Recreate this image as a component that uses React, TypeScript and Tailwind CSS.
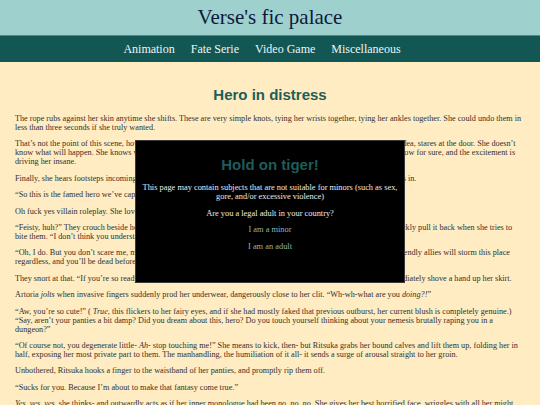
import React from 'react'

const serif = "font-['Liberation_Serif',serif]"
const sans = "font-['Liberation_Sans',Arial,sans-serif]"

const navLinks = ['Animation', 'Fate Serie', 'Video Game', 'Miscellaneous']

function Header() {
  return (
    <header className={serif}>
      <div className="flex h-[35px] items-center justify-center bg-[#9ed0ce]">
        <h1 className="text-[21px] leading-none text-[#0e1a3c]">Verse's fic palace</h1>
      </div>
      <nav className="flex h-[27px] items-center justify-center gap-[16px] border-t border-[#4f8a87] bg-[#135755] pr-[16px]">
        {navLinks.map((link) => (
          <a key={link} href="#" className="text-[12px] text-[#eef4f2]">
            {link}
          </a>
        ))}
      </nav>
    </header>
  )
}

function AgeGate() {
  return (
    <div className="fixed inset-0 flex justify-center pt-[140px]">
      <div className={`h-[143px] w-[270px] border border-[#3a3a3a] bg-black px-[4px] pt-[15px] text-center ${serif}`}>
        <h2 className={`mb-[9px] text-[15px] font-bold leading-[18px] text-[#1f5b58] ${sans}`}>Hold on tiger!</h2>
        <div className="text-[8.4px] leading-[9px] text-[#ececec] [&>p]:mb-[7.5px]">
          <p>This page may contain subjects that are not suitable for minors (such as sex, gore, and/or excessive violence)</p>
          <p>Are you a legal adult in your country?</p>
          <p>
            <a href="#" className="text-[#93b2b0]">I am a minor</a>
          </p>
          <p>
            <a href="#" className="text-[#93b2b0]">I am an adult</a>
          </p>
        </div>
      </div>
    </div>
  )
}

export default function App() {
  return (
    <div className="min-h-screen bg-[#ffecc2]">
      <Header />
      <main className={`px-[15px] pb-8 ${serif}`}>
        <h2 className={`mb-[10px] pt-[24px] text-center text-[15px] font-bold leading-[18px] text-[#1e5d58] ${sans}`}>
          Hero in distress
        </h2>
        <div className="text-[8.2px] leading-[9px] text-[#35302c] [&>p]:mb-[7.4px]">
          <p>
            The rope rubs against her skin anytime she shifts. These are very simple knots, tying her wrists together,
            tying her ankles together. She could undo them in less than three seconds if she truly wanted.
          </p>
          <p>
            That’s not the point of this scene, however. She squirms against her bonds, heart racing wildly, and, giddy
            at the very idea, stares at the door. She doesn’t know what will happen. She knows what she wants to happen,
            of course, but she can’t, not in a million years, really know for sure, and the excitement is driving her
            insane.
          </p>
          <p>
            Finally, she hears footsteps incoming. The door creaks open, and a cloaked figure wearing a cruel smile so
            slowly steps in.
          </p>
          <p>“So this is the famed hero we’ve captured? How disappointing, I expected more.”</p>
          <p>Oh fuck yes villain roleplay. She loves it when they get into character.</p>
          <p>
            “Feisty, huh?” They crouch beside her and then press a gloved thumb against her soft lips, rather teasingly,
            only to quickly pull it back when she tries to bite them. “I don’t think you understand your situation,
            hero.”
          </p>
          <p>
            “Oh, I do. But you don’t scare me, monster. Do your worst, because sooner or later, my dearest friends and my
            very friendly allies will storm this place regardless, and you’ll be dead before the sun rises.”
          </p>
          <p>
            They snort at that. “If you’re so ready for me to do whatever I want with you, then don’t mind if I do.” And
            then immediately shove a hand up her skirt.
          </p>
          <p>
            Artoria <em>jolts</em> when invasive fingers suddenly prod her underwear, dangerously close to her clit.
            “Wh-wh-what are you <em>doing?!</em>”
          </p>
          <p>
            “Aw, you’re so cute!” ( <em>True</em>, this flickers to her fairy eyes, and if she had mostly faked that
            previous outburst, her current blush is completely genuine.) “Say, aren’t your panties a bit damp? Did you
            dream about this, hero? Do you touch yourself thinking about your nemesis brutally raping you in a dungeon?”
          </p>
          <p>
            “Of course not, you degenerate little- <em>Ah</em>- stop touching me!” She means to kick, then- but Ritsuka
            grabs her bound calves and lift them up, folding her in half, exposing her most private part to them. The
            manhandling, the humiliation of it all- it sends a surge of arousal straight to her groin.
          </p>
          <p>Unbothered, Ritsuka hooks a finger to the waistband of her panties, and promptly rip them off.</p>
          <p>“Sucks for you. Because I’m about to make that fantasy come true.”</p>
          <p>
            <em>Yes, yes, yes</em>, she thinks- and outwardly acts as if her inner monologue had been <em>no, no, no</em>.
            She gives her best horrified face, wriggles with all her might, trying desperately to break free from the
            ropes, and lets out a pitiful whimper.
          </p>
        </div>
      </main>
      <AgeGate />
    </div>
  )
}
